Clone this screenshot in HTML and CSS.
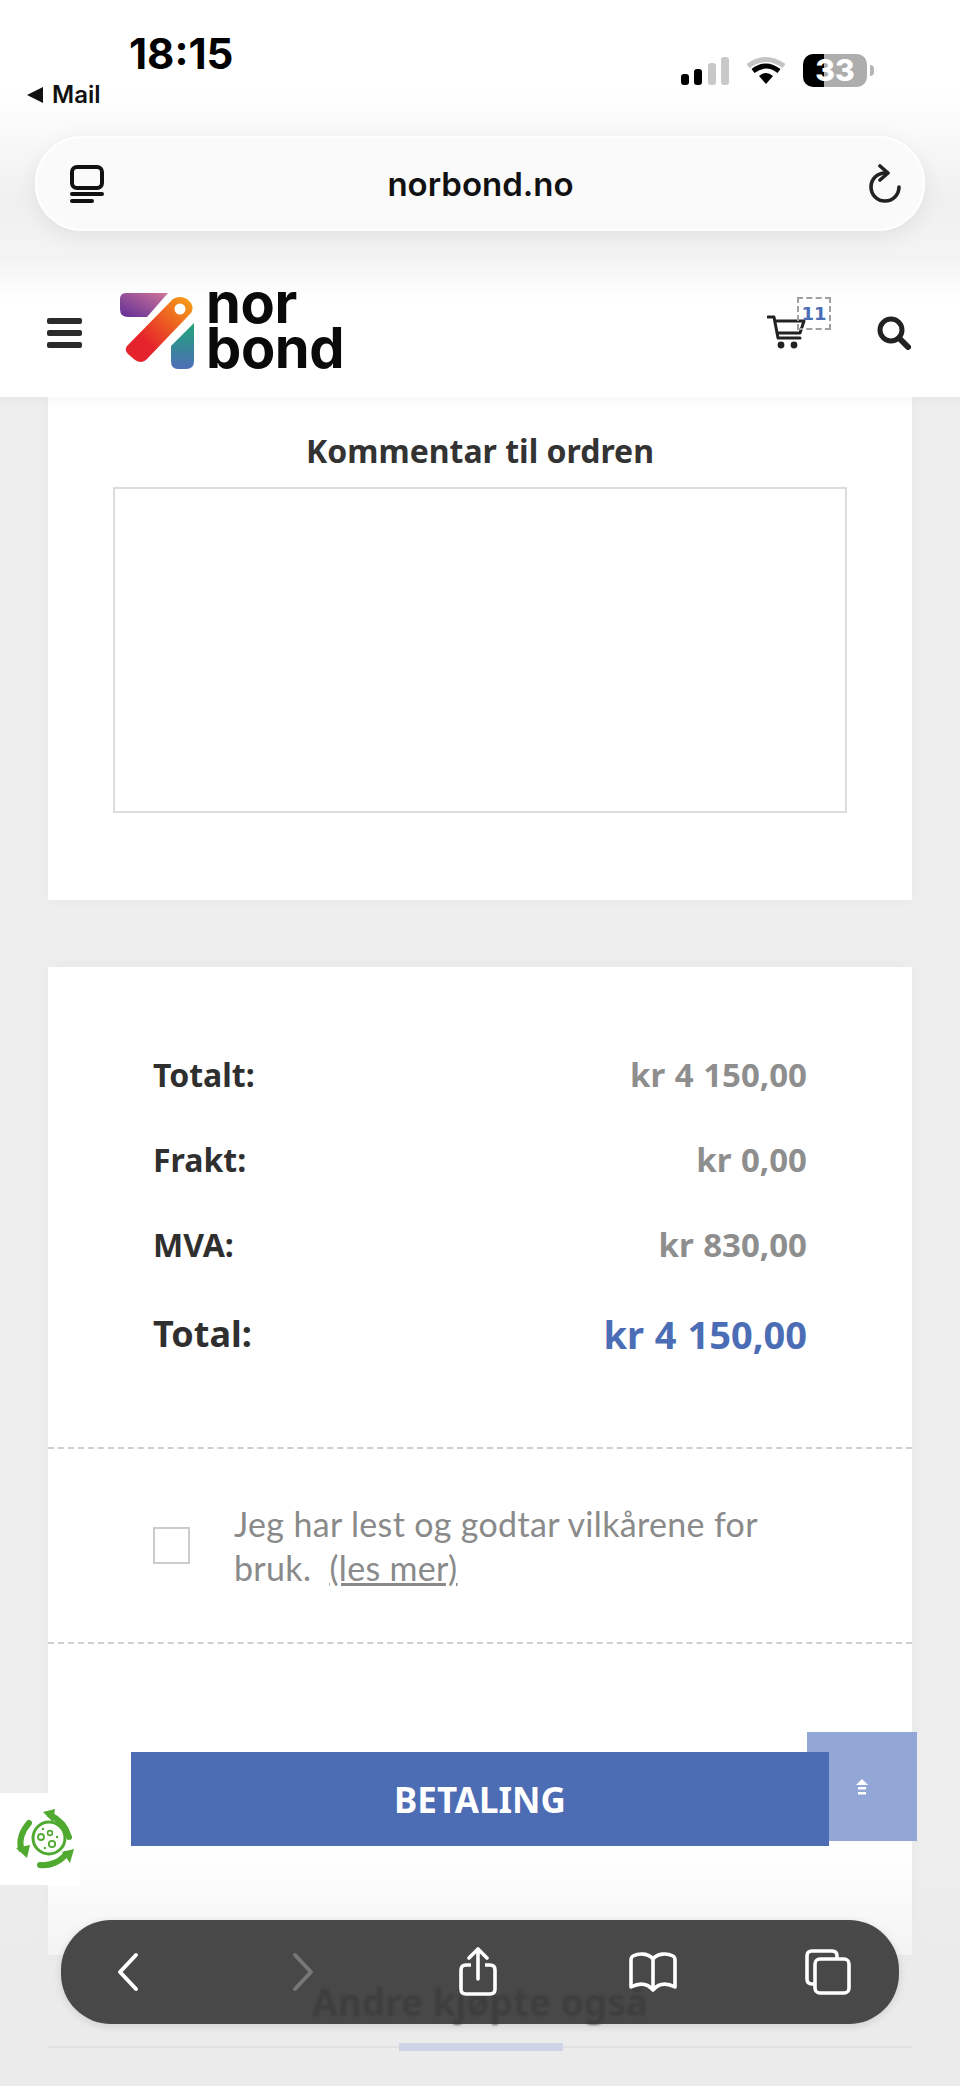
FILE: index.html
```html
<!DOCTYPE html>
<html lang="no">
<head>
    <meta charset="UTF-8">
    <meta name="viewport" content="width=device-width, initial-scale=1.0">
    <title>norbond.no</title>
    <link rel="stylesheet" href="styles.css">
</head>
<body>
    <div class="browser-top">
        <div class="status">
            <div class="status-left">
                <div class="time">18:15</div>
                <div class="back-app"><span class="back-tri"></span>Mail</div>
            </div>
            <div class="status-right">
                <svg class="signal" viewBox="0 0 48 28" width="48" height="28">
                    <rect x="0" y="17" width="8" height="11" rx="3" fill="#000"/>
                    <rect x="13" y="12" width="8" height="16" rx="3" fill="#000"/>
                    <rect x="27" y="6" width="8" height="22" rx="3" fill="#c8c8c8"/>
                    <rect x="40" y="0" width="8" height="28" rx="3" fill="#c8c8c8"/>
                </svg>
                <svg class="wifi" viewBox="0 0 40 29" width="40" height="29">
                    <path d="M2 10 Q20 -3 38 10" fill="none" stroke="#c4c4c4" stroke-width="5"/>
                    <path d="M7 15 Q20 5 33 15" fill="none" stroke="#000" stroke-width="5"/>
                    <path d="M13 20 L20 28 L27 20 Q20 14 13 20 Z" fill="#000"/>
                </svg>
                <div class="battery">33</div>
                <span class="battery-nub"></span>
            </div>
        </div>
        <div class="urlbar">
            <svg viewBox="0 0 34 38" width="34" height="38">
                <rect x="2" y="2" width="30" height="21" rx="5" fill="none" stroke="#111" stroke-width="4"/>
                <rect x="0" y="27" width="34" height="4" rx="2" fill="#111"/>
                <rect x="0" y="34" width="24" height="4" rx="2" fill="#111"/>
            </svg>
            <span class="url">norbond.no</span>
            <svg viewBox="0 0 36 40" width="36" height="40">
                <path d="M18 9 A14 14 0 1 0 32 23" fill="none" stroke="#222" stroke-width="3.6" stroke-linecap="round"/>
                <path d="M13 2 L21 9 L13 16" fill="none" stroke="#222" stroke-width="3.6" stroke-linecap="round" stroke-linejoin="round"/>
            </svg>
        </div>
    </div>

    <header class="site-header">
        <div class="burger"><span></span><span></span><span></span></div>
        <div class="logo">
            <svg viewBox="0 0 74 76" width="74" height="76">
                <defs>
                    <linearGradient id="lg-purple" x1="0" y1="1" x2="1" y2="0">
                        <stop offset="0" stop-color="#5f2d96"/>
                        <stop offset="1" stop-color="#d0769a"/>
                    </linearGradient>
                    <linearGradient id="lg-tag" x1="0" y1="1" x2="1" y2="0">
                        <stop offset="0.3" stop-color="#e5232c"/>
                        <stop offset="1" stop-color="#f6a317"/>
                    </linearGradient>
                    <linearGradient id="lg-teal" x1="0" y1="0" x2="0" y2="1">
                        <stop offset="0" stop-color="#1fa678"/>
                        <stop offset="1" stop-color="#4e6db8"/>
                    </linearGradient>
                </defs>
                <path d="M6 0 H48 L27 24 H8 Q0 24 0 16 V6 Q0 0 6 0 Z" fill="url(#lg-purple)"/>
                <path d="M7 53 L53 6 Q60 2 67 6 L71 10 Q74 15 71 20 L26 67 Q21 71 15 67 L8 61 Q4 57 7 53 Z" fill="url(#lg-tag)"/>
                <circle cx="60" cy="16" r="5.5" fill="#fff"/>
                <path d="M51 53 L74 30 V68 Q74 76 66 76 H58 Q51 76 51 68 Z" fill="url(#lg-teal)"/>
            </svg>
            <div class="logo-text">nor<br>bond</div>
        </div>
        <div class="header-icons">
            <div class="cart">
                <svg viewBox="0 0 40 36" width="40" height="36">
                    <path d="M1 3 H7 L11 24 H33" fill="none" stroke="#222" stroke-width="3" stroke-linecap="round" stroke-linejoin="round"/>
                    <path d="M8 7 H37 L33 19 H10" fill="none" stroke="#222" stroke-width="3" stroke-linejoin="round"/>
                    <circle cx="14" cy="31" r="3.4" fill="#222"/>
                    <circle cx="27" cy="31" r="3.4" fill="#222"/>
                </svg>
                <span class="cart-count">11</span>
            </div>
            <svg class="search" viewBox="0 0 34 34" width="34" height="34">
                <circle cx="14" cy="14" r="11" fill="none" stroke="#222" stroke-width="5"/>
                <path d="M22 22 L31 31" stroke="#222" stroke-width="6" stroke-linecap="round"/>
            </svg>
        </div>
    </header>

    <main class="page">
        <section class="card comment-card">
            <h3>Kommentar til ordren</h3>
            <textarea class="comment-box"></textarea>
        </section>

        <section class="card summary-card">
            <div class="totals">
                <div class="total-row"><span>Totalt:</span><span class="amount">kr 4 150,00</span></div>
                <div class="total-row"><span>Frakt:</span><span class="amount">kr 0,00</span></div>
                <div class="total-row"><span>MVA:</span><span class="amount">kr 830,00</span></div>
                <div class="total-row grand"><span>Total:</span><span class="amount">kr 4 150,00</span></div>
            </div>
            <div class="terms">
                <input type="checkbox" class="terms-check">
                <p>Jeg har lest og godtar vilkårene for bruk. &nbsp;<a href="#">(les mer)</a></p>
            </div>
            <button class="pay-btn">BETALING</button>
        </section>

        <section class="others">
            <h3>Andre kjøpte også</h3>
            <div class="others-line"><span class="others-tab"></span></div>
        </section>
    </main>

    <div class="fade-bottom"></div>

    <div class="to-top">
        <svg viewBox="0 0 12 16" width="12" height="16">
            <path d="M6 0 L12 6 H0 Z" fill="#fff"/>
            <rect x="2" y="8" width="8" height="2.5" fill="#fff"/>
            <rect x="2" y="13" width="8" height="2.5" fill="#fff"/>
        </svg>
    </div>

    <div class="eco-badge">
        <svg viewBox="0 0 80 92" width="80" height="92">
            <g fill="none" stroke="#4faa2f" stroke-width="6" stroke-linecap="round">
                <path d="M69 44 C66 34 59 26 50 22"/>
                <path d="M29 30 C22 38 19 47 21 56"/>
                <path d="M40 72 C50 73 60 69 66 61"/>
            </g>
            <g fill="#4faa2f">
                <polygon points="43,19 55,16 53,29"/>
                <polygon points="27,65 16,55 30,52"/>
                <polygon points="74,56 62,59 70,70"/>
            </g>
            <circle cx="49" cy="45" r="16" fill="none" stroke="#4faa2f" stroke-width="3"/>
            <circle cx="41" cy="44" r="3" fill="none" stroke="#4faa2f" stroke-width="1.8"/>
            <circle cx="50" cy="40" r="2.4" fill="none" stroke="#4faa2f" stroke-width="1.6"/>
            <circle cx="52" cy="51" r="3.2" fill="none" stroke="#4faa2f" stroke-width="1.8"/>
            <circle cx="43" cy="36" r="1.2" fill="#4faa2f"/>
            <circle cx="57" cy="44" r="1.2" fill="#4faa2f"/>
            <circle cx="45" cy="55" r="1.2" fill="#4faa2f"/>
        </svg>
    </div>

    <nav class="toolbar">
        <div class="tool">
            <svg viewBox="0 0 24 40" width="24" height="40"><path d="M20 3 L4 20 L20 37" fill="none" stroke="#fff" stroke-width="4" stroke-linecap="round" stroke-linejoin="round"/></svg>
        </div>
        <div class="tool">
            <svg viewBox="0 0 24 40" width="24" height="40"><path d="M4 3 L20 20 L4 37" fill="none" stroke="#777" stroke-width="4" stroke-linecap="round" stroke-linejoin="round"/></svg>
        </div>
        <div class="tool">
            <svg viewBox="0 0 40 50" width="40" height="50">
                <path d="M13 18 H8 Q3 18 3 23 V42 Q3 47 8 47 H32 Q37 47 37 42 V23 Q37 18 32 18 H27" fill="none" stroke="#fff" stroke-width="3.6"/>
                <path d="M20 32 V3 M11 11 L20 2 L29 11" fill="none" stroke="#fff" stroke-width="3.6" stroke-linecap="round" stroke-linejoin="round"/>
            </svg>
        </div>
        <div class="tool">
            <svg viewBox="0 0 48 42" width="48" height="42">
                <path d="M24 8 C19 2 10 2 4 5 Q2 6 2 9 V36 C10 32 18 32 24 39 C30 32 38 32 46 36 V9 Q46 6 44 5 C38 2 29 2 24 8 Z M24 8 V39" fill="none" stroke="#fff" stroke-width="3.6" stroke-linejoin="round"/>
            </svg>
        </div>
        <div class="tool">
            <svg viewBox="0 0 46 46" width="46" height="46">
                <path d="M9 35 H7 Q2 35 2 30 V7 Q2 2 7 2 H27 Q32 2 32 7 V9" fill="none" stroke="#fff" stroke-width="3.6"/>
                <rect x="10" y="10" width="34" height="34" rx="5" fill="none" stroke="#fff" stroke-width="3.6"/>
            </svg>
        </div>
    </nav>
</body>
</html>
```

FILE: styles.css
```css
html, body { margin: 0; padding: 0; }
body {
    position: relative;
    width: 960px;
    height: 2086px;
    overflow: hidden;
    background: #eeeeee;
    color: #2b2b2b;
    font-family: "Noto Sans", Arial, sans-serif;
}

/* phone chrome */
.browser-top {
    height: 260px;
    background: linear-gradient(#fff 0, #fff 90px, #f0f0f0 200px, #f4f4f4 100%);
    overflow: hidden;
}
.status { display: flex; justify-content: space-between; height: 136px; padding: 0 86px 0 27px; }
.status-left { padding-top: 28px; }
.time { margin-left: 102px; font: 700 42px/52px Inter, sans-serif; color: #000; }
.back-app { display: flex; align-items: center; gap: 9px; font: 600 24px/30px Inter, sans-serif; color: #111; }
.back-tri { width: 0; height: 0; border-style: solid; border-width: 8px 16px 8px 0; border-color: transparent #111 transparent transparent; }
.status-right { display: flex; align-items: center; height: 33px; margin-top: 54px; }
.signal { margin-right: 17px; }
.wifi { margin-right: 17px; }
.battery {
    width: 64px;
    height: 33px;
    border-radius: 10px;
    background: linear-gradient(90deg, #000 0, #000 33%, #adadad 33%);
    color: #fff;
    font: 800 30px/33px Inter, sans-serif;
    text-align: center;
}
.battery-nub { width: 4px; height: 11px; margin-left: 3px; border-radius: 0 4px 4px 0; background: #b5b5b5; }
.urlbar {
    display: flex;
    align-items: center;
    justify-content: space-between;
    box-sizing: border-box;
    width: 890px;
    height: 95px;
    margin: 0 0 0 35px;
    padding: 0 20px 0 33px;
    border: 2px solid #fff;
    border-radius: 47px;
    background: #fafafa;
    box-shadow: 0 6px 22px rgba(0, 0, 0, 0.07);
}
.url { margin-right: 10px; font: 600 33px/40px Inter, sans-serif; color: #111; }

/* site header */
.site-header {
    position: relative;
    display: flex;
    align-items: center;
    box-sizing: border-box;
    height: 137px;
    padding: 0 49px 0 47px;
    background: linear-gradient(#f4f4f4 0, #fff 40px);
    box-shadow: 0 3px 14px rgba(0, 0, 0, 0.04);
}
.burger { display: flex; flex-direction: column; gap: 6px; width: 35px; margin-top: 8px; }
.burger span { height: 6px; border-radius: 2px; background: #2b2b2b; }
.logo { display: flex; gap: 12px; margin: 6px 0 0 38px; }
.logo-text { font: 700 56px/45px Inter, sans-serif; letter-spacing: -0.4px; color: #0a0a0a; margin-top: -12px; }
.header-icons { display: flex; align-items: flex-start; margin-left: auto; margin-top: 6px; }
.cart { position: relative; width: 40px; height: 36px; margin-right: 70px; }
.cart-count {
    position: absolute;
    left: 30px;
    top: -17px;
    box-sizing: border-box;
    width: 34px;
    height: 33px;
    border: 2px dashed #a0a0a0;
    color: #4b6db5;
    font: 700 18px/30px "DejaVu Sans", sans-serif;
    text-align: center;
}
.search { margin-top: 2px; }

/* page cards */
.card { margin: 0 48px; background: #fff; box-shadow: 0 0 16px rgba(0, 0, 0, 0.03); }
.comment-card { box-sizing: border-box; height: 503px; padding: 32px 65px 0; }
.comment-card h3 { margin: 0 0 14px; font-size: 32px; line-height: 44px; font-weight: 700; text-align: center; color: #333; }
.comment-box {
    display: block;
    box-sizing: border-box;
    width: 734px;
    height: 326px;
    border: 2px solid #dddddd;
    background: #fff;
    resize: none;
}
.summary-card { height: 988px; margin-top: 67px; }
.totals { padding: 65px 105px 0 105px; height: 482px; box-sizing: border-box; border-bottom: 2px dashed #cfcfcf; }
.total-row { display: flex; justify-content: space-between; align-items: center; height: 85px; font-size: 32px; font-weight: 700; color: #2f2f2f; }
.total-row .amount { color: #8e8e8e; font-size: 33px; word-spacing: 1px; }
.total-row.grand { height: 93px; font-size: 36px; }
.total-row.grand .amount { color: #4b6db5; font-size: 38px; }
.terms {
    display: flex;
    align-items: center;
    box-sizing: border-box;
    height: 195px;
    padding: 0 90px 0 105px;
    border-bottom: 2px dashed #cfcfcf;
}
.terms-check {
    appearance: none;
    flex: none;
    width: 37px;
    height: 37px;
    margin: 0 44px 0 0;
    border: 2px solid #cccccc;
    background: #fff;
}
.terms p { margin: 0; font: 400 34px/44px Lato, sans-serif; letter-spacing: 0.33px; color: #8a8a8a; }
.terms a { color: #8a8a8a; text-decoration: underline; }
.pay-btn {
    display: block;
    position: relative;
    z-index: 2;
    width: 698px;
    height: 94px;
    margin: 108px 0 0 83px;
    border: none;
    background: #4c6cb4;
    color: #fff;
    font: 700 35px/94px "Noto Sans", sans-serif;
}

/* below the fold, mostly behind the toolbar */
.others { margin: 0 48px; }
.others h3 { margin: 22px 0 0; font-size: 37px; line-height: 50px; font-weight: 700; text-align: center; color: #000; filter: blur(0.8px); }
.others-line { position: relative; height: 2px; margin-top: 19px; background: #dadada; }
.others-tab { position: absolute; left: 351px; top: -3px; width: 164px; height: 8px; background: #b0c0e4; }

.fade-bottom {
    position: absolute;
    left: 0;
    right: 0;
    top: 1850px;
    bottom: 0;
    background: linear-gradient(rgba(232, 232, 232, 0), rgba(232, 232, 232, 0.5) 45%, rgba(232, 232, 232, 0.5));
}

/* floating things */
.to-top {
    position: absolute;
    left: 807px;
    top: 1732px;
    z-index: 1;
    display: flex;
    align-items: center;
    justify-content: center;
    width: 110px;
    height: 109px;
    background: #92a7d6;
}
.eco-badge { position: absolute; left: 0; top: 1793px; width: 80px; height: 92px; background: #fff; }
.toolbar {
    position: absolute;
    left: 61px;
    top: 1920px;
    z-index: 3;
    display: flex;
    align-items: center;
    gap: 127px;
    box-sizing: border-box;
    width: 838px;
    height: 104px;
    padding-left: 43px;
    border-radius: 50px;
    background: rgba(58, 58, 58, 0.92);
    box-shadow: 0 2px 8px rgba(0, 0, 0, 0.12);
}
.tool { display: flex; justify-content: center; width: 48px; flex: none; }
```
